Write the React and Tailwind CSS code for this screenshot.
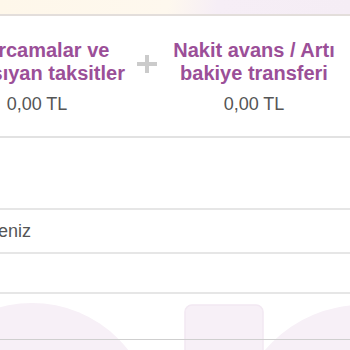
export default function App() {
  const font = { fontFamily: '"Liberation Sans", Arial, sans-serif' };
  return (
    <div className="relative w-[350px] h-[350px] overflow-hidden bg-white" style={font}>
      <svg className="absolute left-0 top-0" width="350" height="350" viewBox="0 0 350 350">
        <circle cx="32" cy="425" r="122" fill="#f7f0f7" />
        <rect x="185" y="305" width="78" height="80" rx="7" fill="#f7f0f7" stroke="#f2e8f2" strokeWidth="1.5" />
        <circle cx="362" cy="432" r="127" fill="#f7f0f7" />
      </svg>
      <div className="relative flex flex-col">
        <div className="h-[14px] bg-[linear-gradient(100deg,#fef7ea_0%,#fef8ee_48%,#f6eef6_62%,#f5edf5_100%)]" />
        <div className="h-[2px] bg-[#e3dedb]" />
        <div className="flex bg-white pt-[23px] pb-[20px] border-b-2 border-[#e2e2e2]">
          <div className="ml-[-63px] w-[200px] shrink-0 flex flex-col items-center">
            <div className="pl-[8px] text-[20px] leading-[23px] font-bold text-[#9b4f98] text-center whitespace-nowrap">
              <div>Harcamalar ve</div>
              <div>yansıyan taksitler</div>
            </div>
            <div className="mt-[7px] text-[18px] leading-[24px] text-[#555555]">0,00 TL</div>
          </div>
          <div className="w-[20px] shrink-0 flex justify-center pt-[16px]">
            <svg width="20" height="18" viewBox="0 0 20 18">
              <rect x="8" y="0" width="4" height="18" fill="#cbcbcb" />
              <rect x="0" y="7" width="20" height="4" fill="#cbcbcb" />
            </svg>
          </div>
          <div className="w-[194px] shrink-0 flex flex-col items-center">
            <div className="text-[20px] leading-[23px] font-bold text-[#9b4f98] text-center whitespace-nowrap">
              <div>Nakit avans / Artı</div>
              <div>bakiye transferi</div>
            </div>
            <div className="mt-[7px] text-[18px] leading-[24px] text-[#555555]">0,00 TL</div>
          </div>
        </div>
        <div className="h-[72px] border-b-2 border-[#e6e6e6] bg-white" />
        <div className="h-[44px] border-b-2 border-[#e6e6e6] bg-white flex items-center">
          <div className="w-[31px] flex justify-end whitespace-nowrap text-[18px] text-[#555555]">Asgari ödemeniz</div>
        </div>
        <div className="h-[40px] border-b-2 border-[#e6e6e6] bg-white" />
        <div className="h-[46px] border-b border-[#cfcfcf]" />
      </div>
    </div>
  );
}
